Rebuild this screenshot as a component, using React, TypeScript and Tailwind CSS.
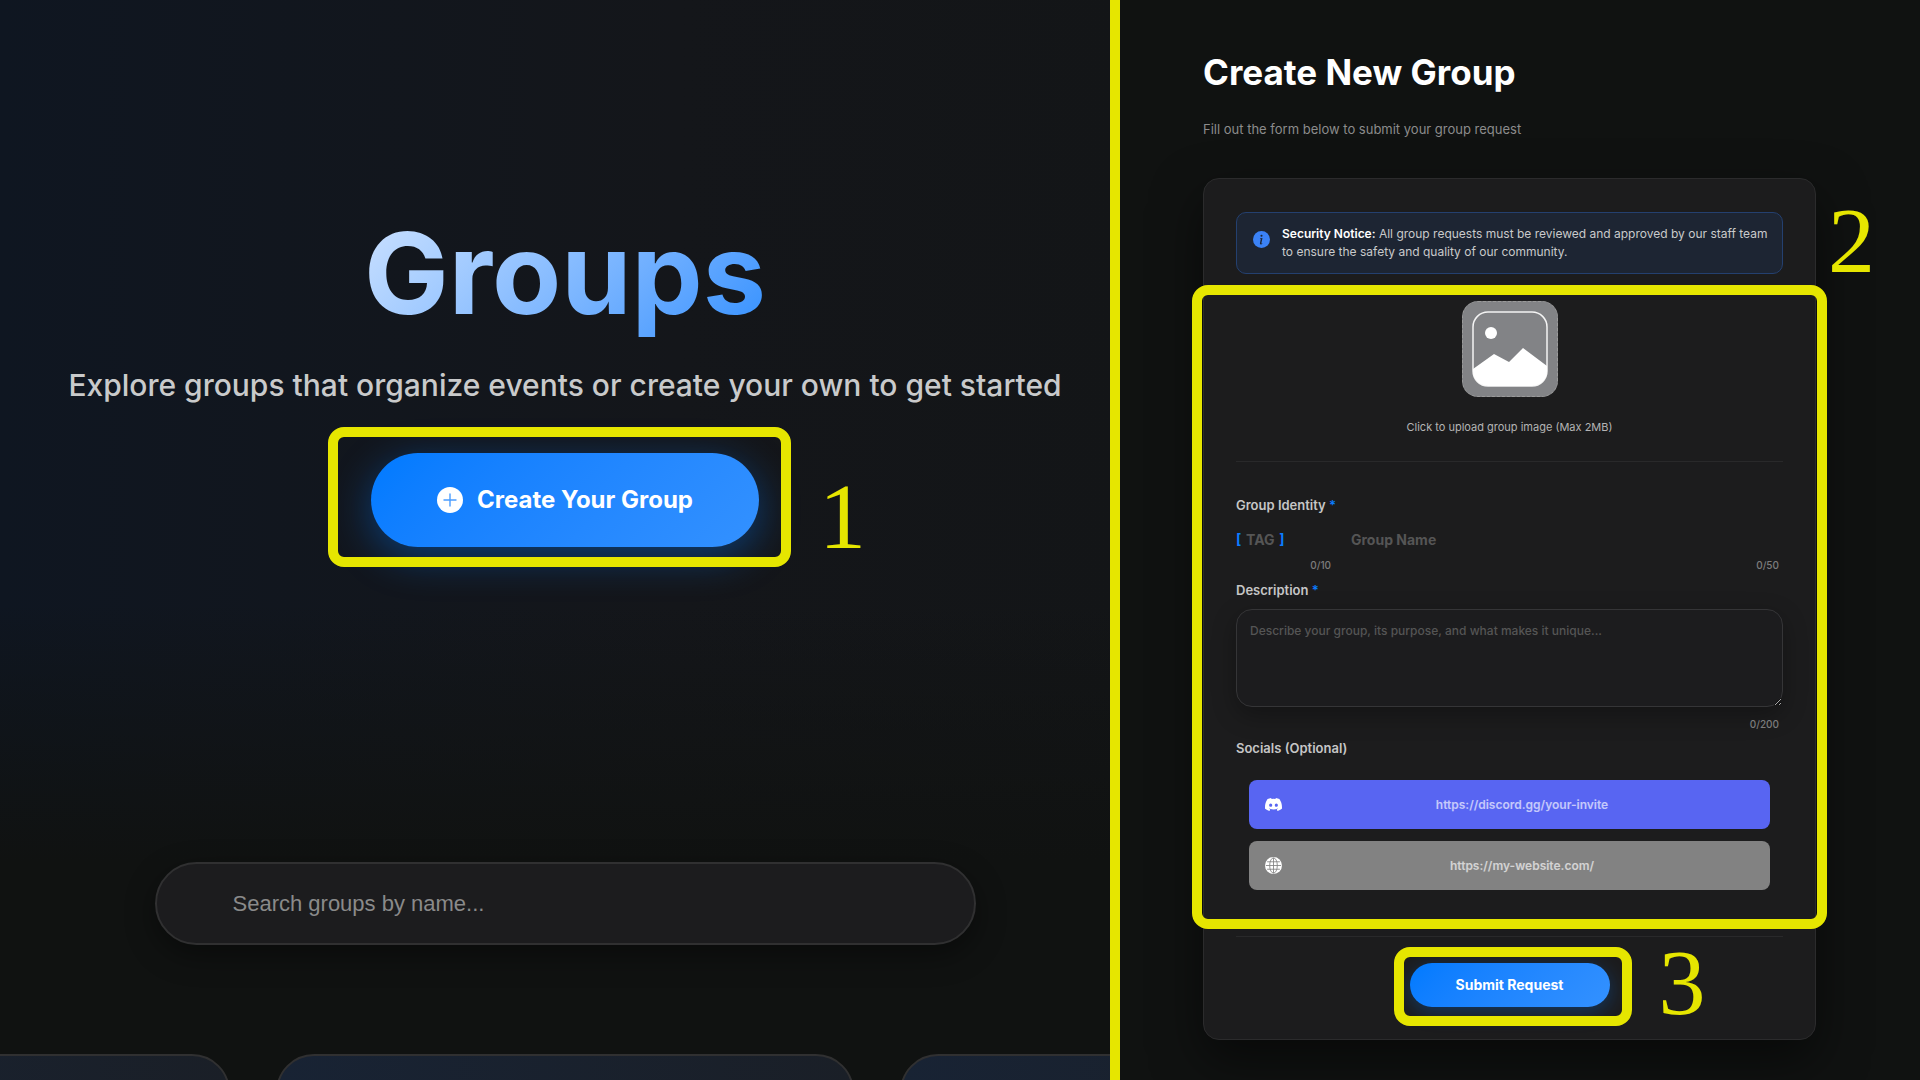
import React from 'react';

interface CounterInputProps {
  id: string;
  label: string;
  placeholder: string;
  max: number;
}

function Callout({ className }: { className: string }) {
  return <div className={`absolute border-10 border-[#e6e600] rounded-2xl pointer-events-none ${className}`} />;
}

function StepNumber({ value, className }: { value: number; className: string }) {
  return (
    <span
      className={`absolute font-['Liberation_Serif',serif] text-[94px] leading-none text-[#e6e600] pointer-events-none ${className}`}
    >
      {value}
    </span>
  );
}

function PlusCircle() {
  return (
    <svg className="w-[26px] h-[26px]" viewBox="0 0 26 26" aria-hidden="true">
      <circle cx="13" cy="13" r="13" fill="#fff" />
      <path d="M13 7v12M7 13h12" stroke="#4b9dff" strokeWidth="1.4" strokeLinecap="round" />
    </svg>
  );
}

function InfoIcon() {
  return (
    <svg className="w-[17px] h-[17px] shrink-0" viewBox="0 0 16 16" aria-hidden="true">
      <circle cx="8" cy="8" r="8" fill="#3b82f6" />
      <path
        d="m8.93 6.588-2.29.287-.082.38.45.083c.294.07.352.176.288.469l-.738 3.468c-.194.897.105 1.319.808 1.319.545 0 1.178-.252 1.465-.598l.088-.416c-.2.176-.492.246-.686.246-.275 0-.375-.193-.304-.533zM9 4.5a1 1 0 1 1-2 0 1 1 0 0 1 2 0"
        fill="#1d2635"
      />
    </svg>
  );
}

function DiscordIcon() {
  return (
    <svg className="w-[17px] h-[17px] shrink-0" viewBox="0 0 16 16" fill="#fff" aria-hidden="true">
      <path d="M13.545 2.907a13.2 13.2 0 0 0-3.257-1.011.05.05 0 0 0-.052.025c-.141.25-.297.577-.406.833a12.2 12.2 0 0 0-3.658 0 8 8 0 0 0-.412-.833.05.05 0 0 0-.052-.025c-1.125.194-2.22.534-3.257 1.011a.04.04 0 0 0-.021.018C.356 6.024-.213 9.047.066 12.032q.003.022.021.037a13.3 13.3 0 0 0 3.995 2.02.05.05 0 0 0 .056-.019q.463-.63.818-1.329a.05.05 0 0 0-.01-.059l-.018-.011a9 9 0 0 1-1.248-.595.05.05 0 0 1-.02-.066l.015-.019q.127-.095.248-.195a.05.05 0 0 1 .051-.007c2.619 1.196 5.454 1.196 8.041 0a.05.05 0 0 1 .053.007q.121.1.248.195a.05.05 0 0 1-.004.085 8 8 0 0 1-1.249.594.05.05 0 0 0-.03.03.05.05 0 0 0 .003.041c.24.465.515.909.817 1.329a.05.05 0 0 0 .056.019 13.2 13.2 0 0 0 4.001-2.02.05.05 0 0 0 .021-.037c.334-3.451-.559-6.449-2.366-9.106a.03.03 0 0 0-.02-.019m-8.198 7.307c-.789 0-1.438-.724-1.438-1.612s.637-1.613 1.438-1.613c.807 0 1.45.73 1.438 1.613 0 .888-.637 1.612-1.438 1.612m5.316 0c-.788 0-1.438-.724-1.438-1.612s.637-1.613 1.438-1.613c.807 0 1.451.73 1.438 1.613 0 .888-.631 1.612-1.438 1.612" />
    </svg>
  );
}

function GlobeIcon() {
  return (
    <svg className="w-[17px] h-[17px] shrink-0" viewBox="0 0 16 16" aria-hidden="true">
      <circle cx="8" cy="8" r="8" fill="#fff" />
      <g fill="none" stroke="#828282" strokeWidth="0.8">
        <path d="M8 0.8v14.4M0.8 8h14.4M2 4.5h12M2 11.5h12" />
        <ellipse cx="8" cy="8" rx="3.6" ry="7.2" />
      </g>
    </svg>
  );
}

function PictureIcon() {
  return (
    <svg className="w-[76px] h-[76px]" viewBox="0 0 76 76" aria-hidden="true">
      <rect x="1" y="1" width="74" height="74" rx="15" fill="none" stroke="#f4f4f4" strokeWidth="1.5" />
      <circle cx="19" cy="22" r="6" fill="#fff" />
      <path d="M1 58 22 43 37 51 51 37 75 55V60A15 15 0 0 1 60 75H16A15 15 0 0 1 1 60Z" fill="#fff" />
    </svg>
  );
}

function FieldLabel({ htmlFor, text, required }: { htmlFor: string; text: string; required?: boolean }) {
  return (
    <label htmlFor={htmlFor} className="block text-[13px] leading-4 font-semibold text-[#c6c6c6]">
      {text}
      {required && <span className="text-[#0a7cff]"> *</span>}
    </label>
  );
}

function Counter({ max }: { max: number }) {
  return <p className="text-right text-[10px] leading-4 font-medium text-[#7c7c7c] pr-1">0/{max}</p>;
}

function NameInput({ id, label, placeholder, max }: CounterInputProps) {
  return (
    <div className="flex-1">
      <input
        id={id}
        aria-label={label}
        placeholder={placeholder}
        maxLength={max}
        className="block w-full h-6 text-sm font-bold text-white placeholder-[#555555] bg-transparent outline-none"
      />
      <div className="mt-1.5">
        <Counter max={max} />
      </div>
    </div>
  );
}

interface SocialInputProps {
  icon: React.ReactNode;
  label: string;
  placeholder: string;
  className: string;
}

function SocialInput({ icon, label, placeholder, className }: SocialInputProps) {
  return (
    <label className={`flex items-center gap-2 h-[49px] px-4 rounded-lg ${className}`}>
      {icon}
      <input
        type="url"
        aria-label={label}
        placeholder={placeholder}
        className="flex-1 min-w-0 bg-transparent text-center text-xs font-semibold text-white placeholder-white/65 outline-none"
      />
    </label>
  );
}

function GroupsHero() {
  return (
    <section className="min-w-0 overflow-hidden bg-[#101211]">
      {/* the hero column runs slightly under the divider */}
      <div className="-mr-5">
        <div className="flex flex-col items-center pt-[203px] h-[862px] bg-[linear-gradient(to_bottom,transparent_70%,#101211),linear-gradient(to_right,#0f1621,#14161a_60%,#131517)]">
          <h1 className="text-[113px] leading-[140px] font-bold bg-linear-135 from-[#cfe3ff] to-[#2e8fff] bg-clip-text text-transparent">
            Groups
          </h1>
          <p className="mt-[22px] text-[30px] leading-10 font-medium text-[#c9cacb] whitespace-nowrap">
            Explore groups that organize events or create your own to get started
          </p>
          <div className="relative mt-12">
            <button
              type="button"
              className="flex items-center justify-center gap-3.5 w-[388px] h-[94px] rounded-full bg-linear-135 from-[#007aff] to-[#3391ff] text-2xl font-bold text-white shadow-[0_10px_40px_rgba(0,122,255,0.4)]"
            >
              <PlusCircle />
              <span>Create Your Group</span>
            </button>
            <Callout className="-top-[26px] -bottom-5 -left-[43px] -right-8" />
            <StepNumber value={1} className="-right-[107px] top-4" />
          </div>
        </div>

        <div className="flex justify-center">
          <input
            type="search"
            aria-label="Search groups"
            placeholder="Search groups by name..."
            className="w-[821px] h-[83px] rounded-full border-2 border-[#303031] bg-[#1c1c1e] px-[76px] font-['Liberation_Sans',sans-serif] text-[22px] text-white placeholder-[#8a8a8a] shadow-[0_10px_30px_rgba(0,0,0,0.4)] outline-none"
          />
        </div>

        <div className="flex justify-center gap-[46px] mt-[109px] h-[26px] overflow-hidden">
          <div className="w-[578px] h-40 shrink-0 rounded-[38px] border-2 border-[#303031] bg-linear-to-r from-[#182334] to-[#1a1f27]" />
          <div className="w-[578px] h-40 shrink-0 rounded-[38px] border-2 border-[#303031] bg-linear-to-r from-[#182334] to-[#1a1f27]" />
          <div className="w-[578px] h-40 shrink-0 rounded-[38px] border-2 border-[#303031] bg-linear-to-r from-[#182334] to-[#1a1f27]" />
        </div>
      </div>
    </section>
  );
}

function CreateGroupForm() {
  return (
    <section className="min-w-0 bg-[#101211] pl-[83px] pr-[104px] pt-12">
      <h2 className="text-[35px] leading-12 font-bold text-white">Create New Group</h2>
      <p className="mt-[23px] text-[13px] leading-5 text-[#8c8c8c]">
        Fill out the form below to submit your group request
      </p>

      <form className="mt-[39px] px-8 pt-[33px] pb-8 rounded-2xl border border-[#2b2b2c] bg-[#1c1c1d] shadow-[0_20px_50px_rgba(0,0,0,0.5)]">
        <div className="relative flex gap-3 pl-4 pr-1 py-3 rounded-[10px] border border-[#24406f] bg-[#1d2533]">
          <span className="pt-1.5">
            <InfoIcon />
          </span>
          <p className="text-xs leading-[18px] text-[#c9cacb]">
            <strong className="font-semibold text-white">Security Notice:</strong> All group requests must be reviewed
            and approved by our staff team to ensure the safety and quality of our community.
          </p>
          <StepNumber value={2} className="-right-[93px] -top-5" />
        </div>

        <div className="relative mt-[27px]">
          <div className="flex flex-col items-center pb-[26px] border-b border-[#29292a]">
            <button
              type="button"
              aria-label="Upload group image"
              className="flex items-center justify-center w-24 h-24 rounded-2xl border border-dashed border-[#9a9a9a] bg-[#828386]"
            >
              <PictureIcon />
            </button>
            <p className="mt-[22px] text-[11px] leading-4 text-[#b4b4b4]">Click to upload group image (Max 2MB)</p>
          </div>

          <div className="mt-[35px]">
            <FieldLabel htmlFor="group-tag" text="Group Identity" required />
            <div className="flex gap-4 mt-3.5">
              <div className="w-[99px]">
                <div className="flex items-center gap-0.5 h-6 text-sm font-bold text-[#0a7cff]">
                  <span>[</span>
                  <input
                    id="group-tag"
                    placeholder="TAG"
                    maxLength={10}
                    className="w-[34px] h-6 text-center text-white placeholder-[#555555] bg-transparent outline-none"
                  />
                  <span>]</span>
                </div>
                <div className="mt-1.5">
                  <Counter max={10} />
                </div>
              </div>
              <NameInput id="group-name" label="Group name" placeholder="Group Name" max={50} />
            </div>
          </div>

          <div className="mt-[9px]">
            <FieldLabel htmlFor="description" text="Description" required />
            <textarea
              id="description"
              placeholder="Describe your group, its purpose, and what makes it unique..."
              className="block mt-[11px] w-full h-[98px] rounded-2xl border border-[#353537] bg-[#1c1c1e] px-[13px] py-[11px] text-xs leading-5 font-medium text-white placeholder-[#555555] shadow-[0_8px_24px_rgba(0,0,0,0.3)] outline-none resize"
            />
            <div className="mt-[9px]">
              <Counter max={200} />
            </div>
          </div>

          <fieldset className="mt-2">
            <legend className="text-[13px] leading-4 font-semibold text-[#c6c6c6]">Socials (Optional)</legend>
            <div className="flex flex-col gap-3 mt-6 px-[13px]">
              <SocialInput
                icon={<DiscordIcon />}
                label="Discord invite"
                placeholder="https://discord.gg/your-invite"
                className="bg-[#5865f2]"
              />
              <SocialInput
                icon={<GlobeIcon />}
                label="Website"
                placeholder="https://my-website.com/"
                className="bg-[#828282]"
              />
            </div>
          </fieldset>

          <Callout className="-top-4 -bottom-[39px] -inset-x-11" />
        </div>

        <div className="flex justify-center mt-[46px] pt-[26px] border-t border-[#29292a]">
          <div className="relative">
            <button
              type="submit"
              className="w-[200px] h-11 rounded-full bg-linear-135 from-[#007aff] to-[#3391ff] text-sm font-bold text-white shadow-[0_5px_20px_rgba(0,122,255,0.3)]"
            >
              Submit Request
            </button>
            <Callout className="-top-4 -bottom-[19px] -left-4 -right-[22px]" />
            <StepNumber value={3} className="-right-[96px] -top-7" />
          </div>
        </div>
      </form>
    </section>
  );
}

export default function App() {
  return (
    <main className="grid grid-cols-[minmax(0,111fr)_10px_minmax(0,80fr)] min-h-screen overflow-hidden bg-[#101211] font-['Inter',sans-serif]">
      <GroupsHero />
      <div className="bg-[#e6e600]" />
      <CreateGroupForm />
    </main>
  );
}
